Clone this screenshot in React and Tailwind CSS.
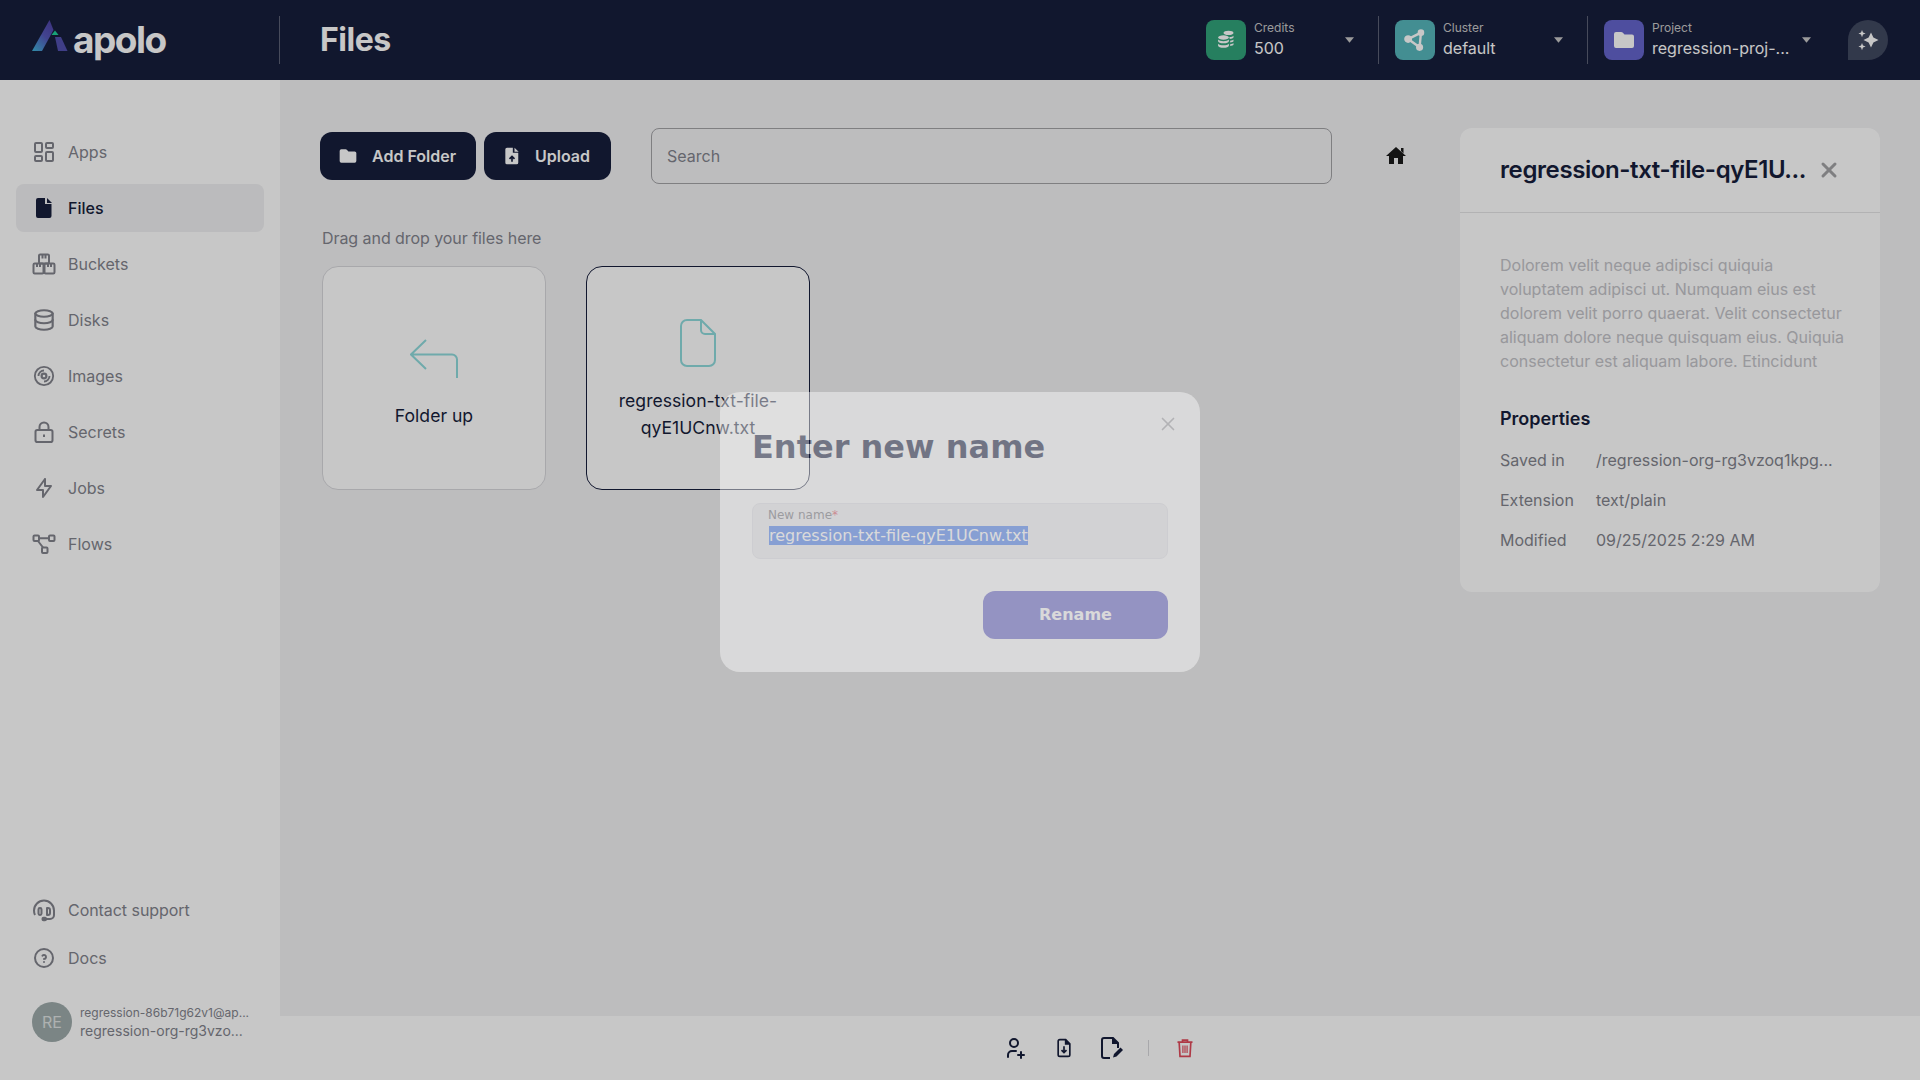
import React from "react";
import { LayoutDashboard, X } from "lucide-react";
import { TbDatabase, TbBolt, TbHelpCircle, TbUserPlus } from "react-icons/tb";

const Folder = ({ className }) => (
  <svg viewBox="0 0 24 24" className={className} fill="currentColor"><path d="M4 4h5.2c.5 0 1 .2 1.4.6L12.5 6.5H20a2 2 0 0 1 2 2V18a2 2 0 0 1-2 2H4a2 2 0 0 1-2-2V6a2 2 0 0 1 2-2z" /></svg>
);
const FileFill = ({ className }) => (
  <svg viewBox="0 0 24 24" className={className} fill="currentColor"><path d="M6 2h7v6h6.5v12a2 2 0 0 1-2 2H6a2 2 0 0 1-2-2V4a2 2 0 0 1 2-2z" /><path d="M15 2l5 5h-5z" /></svg>
);
const FileUp = ({ className }) => (
  <svg viewBox="0 0 24 24" className={className}><path fill="currentColor" d="M6 2h7v6h6.5v12a2 2 0 0 1-2 2H6a2 2 0 0 1-2-2V4a2 2 0 0 1 2-2z" /><path fill="currentColor" d="M15 2l5 5h-5z" /><path d="M12 19v-6M9 15.5l3-3 3 3" stroke="#171e3c" strokeWidth="2" fill="none" /></svg>
);
const BucketsIcon = ({ className }) => (
  <svg viewBox="0 0 24 24" className={className} fill="none" stroke="currentColor" strokeWidth="2" strokeLinejoin="round"><rect x="7" y="2.5" width="10" height="9" rx="1.2" /><rect x="1.5" y="11.5" width="10" height="10" rx="1.2" /><rect x="12.5" y="11.5" width="10" height="10" rx="1.2" /><path d="M10.5 3v3.5M13.5 3v3.5M5 12v3M8 12v3M16 12v3M19 12v3" /></svg>
);
const ImagesIcon = ({ className }) => (
  <svg viewBox="0 0 24 24" className={className} fill="none" stroke="currentColor" strokeWidth="2"><circle cx="12" cy="12" r="10" /><path d="M6 12a6 6 0 0 1 6-6" /><path d="M18 12a6 6 0 0 1-6 6" /><circle cx="12" cy="12" r="2.6" strokeWidth="2.4" /></svg>
);
const LockIcon = ({ className }) => (
  <svg viewBox="0 0 24 24" className={className} fill="none" stroke="currentColor" strokeWidth="2" strokeLinejoin="round"><rect x="3.5" y="10" width="17" height="12" rx="1.8" /><path d="M7.5 10V7a4.5 4.5 0 0 1 9 0v3" /><path d="M12 14.5v2.5" /></svg>
);
const HeadsetIcon = ({ className }) => (
  <svg viewBox="0 0 24 24" className={className} fill="none" stroke="currentColor" strokeWidth="2" strokeLinejoin="round"><path d="M3 17a10 10 0 0 1-1-4.5 10 10 0 0 1 20 0V17a4 4 0 0 1-4 4h-4" /><rect x="6.5" y="10" width="3" height="7" rx="1.4" /><path d="M15 10h1a2 2 0 0 1 2 2v3a2 2 0 0 1-2 2h-1z" /><rect x="10.5" y="19.8" width="3.5" height="2.4" rx="1" fill="currentColor" /></svg>
);
const FlowsIcon = ({ className }) => (
  <svg viewBox="0 0 24 24" className={className} fill="none" stroke="currentColor" strokeWidth="2" strokeLinejoin="round"><rect x="1.5" y="3.5" width="5.5" height="5.5" rx="1" /><rect x="17" y="3.5" width="5.5" height="5.5" rx="1" /><rect x="10" y="15.5" width="5.5" height="5.5" rx="1" /><path d="M7 6.2h10M6 9l5 6.5" /></svg>
);
const FileDown = ({ className }) => (
  <svg viewBox="0 0 24 24" className={className} fill="none" stroke="currentColor" strokeWidth="2"><path d="M14 2H7a2 2 0 0 0-2 2v16a2 2 0 0 0 2 2h10a2 2 0 0 0 2-2V7z" /><path d="M14 2v5h5" fill="currentColor" /><path d="M12 10v7M9 14.5l3 3 3-3" /></svg>
);
const FileEdit = ({ className }) => (
  <svg viewBox="0 0 24 24" className={className} fill="none" stroke="currentColor" strokeWidth="2"><path d="M10 22H4a2 2 0 0 1-2-2V4a2 2 0 0 1 2-2h9l5 5v5" /><path d="M13 2v5h5" fill="currentColor" /><path d="M13 21.5l1-3.5 6.5-6.5 2.5 2.5-6.5 6.5z" fill="currentColor" stroke="none" /></svg>
);
const Trash = ({ className }) => (
  <svg viewBox="0 0 24 24" className={className} fill="none" stroke="currentColor" strokeWidth="2"><path d="M3 5h18M9 5V2.5h6V5M5 5l1 17h12l1-17" /><path d="M9.5 9v9M12 9v9M14.5 9v9" strokeWidth="1.4" /></svg>
);
const Coins = ({ className }) => (
  <svg viewBox="0 0 24 24" className={className} fill="currentColor"><path d="M9 3.5c0-1.4 2.7-2.5 6-2.5s6 1.100 6 2.500S18.300 6 15 6 9 4.900 9 3.500z" /><path d="M16 8.500c2.500-.1 4.300-.9 5-1.700v2.200c-.5.800-2.200 1.500-4.500 1.700zM17 12.800c2-.2 3.400-.8 4-1.500v2.200c-.5.700-2 1.300-4 1.500zM17 17c2-.2 3.400-.8 4-1.500v2.200c-.5.700-2 1.300-4 1.500z" /><ellipse cx="9" cy="9" rx="6.500" ry="2.700" /><path d="M2.500 11.500c1.200 1.100 3.700 1.900 6.500 1.900s5.300-.8 6.500-1.900v2c0 1.400-2.900 2.500-6.500 2.500s-6.500-1.100-6.500-2.500z" /><path d="M2.500 16.500c1.200 1.100 3.700 1.900 6.500 1.900s5.300-.8 6.500-1.900v2.300c0 1.400-2.900 2.500-6.500 2.500s-6.500-1.100-6.500-2.500z" /></svg>
);
const ClusterIcon = ({ className }) => (
  <svg viewBox="0 0 24 24" className={className} fill="none" stroke="currentColor" strokeWidth="2.6" strokeLinejoin="round"><path d="M18.500 4L4.500 11l12.500 9z" /><circle cx="18.500" cy="4" r="2.300" fill="currentColor" /><circle cx="4.500" cy="11" r="3" fill="currentColor" /><circle cx="17" cy="20" r="2.600" fill="currentColor" /></svg>
);
const Sparkles = ({ className }) => (
  <svg viewBox="0 0 24 24" className={className} fill="currentColor"><path d="M15 4.500l2.400 5.100 5.100 2.400-5.100 2.400L15 19.500l-2.400-5.100L7.500 12l5.100-2.400z" /><path d="M6 2l1 2.600L9.600 5.600 7 6.600 6 9.200 5 6.600 2.400 5.600 5 4.600z" /><path d="M6 15l1 2.600 2.600 1L7 19.600 6 22.200l-1-2.600-2.600-1 2.600-1z" /></svg>
);
const HomeIcon = ({ className }) => (
  <svg viewBox="0 0 24 24" className={className} fill="currentColor"><path d="M10 20v-6h4v6h5v-8h3L12 3 2 12h3v8z" /><path d="M17 4h2.500v5.500L17 7z" /></svg>
);
const Caret = () => (
  <svg viewBox="0 0 10 6" className="w-[9px] h-[6px] text-[#c7c7c7] shrink-0" fill="currentColor"><path d="M0 0h10L5 6z" /></svg>
);

const Logo = () => (
  <div className="flex items-center">
    <svg viewBox="0 0 36 32" className="w-[36px] h-[32px] -mt-[9px]">
      <defs>
        <linearGradient id="lg" x1="0" y1="1" x2="0.7" y2="0">
          <stop offset="0" stopColor="#3fb4d8" />
          <stop offset="0.6" stopColor="#5557b8" />
          <stop offset="1" stopColor="#5046a8" />
        </linearGradient>
      </defs>
      <path d="M17.500 0L0 31h10L21.500 10z" fill="url(#lg)" />
      <path d="M23 17h6l6.500 14H26z" fill="#5150ad" />
      <path d="M23 10.500l3.500 4.500h-7z" fill="#1fd09a" />
    </svg>
    <span className="ml-[5px] mb-[2px] text-[37px] font-bold text-white tracking-[-1.5px] leading-none font-['Inter',sans-serif]">apolo</span>
  </div>
);

const nav = [
  ["Apps", <LayoutDashboard className="w-6 h-6" strokeWidth={2} />],
  ["Files", <FileFill className="w-6 h-6" />],
  ["Buckets", <BucketsIcon className="w-6 h-6" />],
  ["Disks", <TbDatabase className="w-[26px] h-[26px] shrink-0" />],
  ["Images", <ImagesIcon className="w-[22px] h-[22px]" />],
  ["Secrets", <LockIcon className="w-6 h-6" />],
  ["Jobs", <TbBolt className="w-6 h-6" />],
  ["Flows", <FlowsIcon className="w-6 h-6" />],
];

const Selector = ({ color, icon, label, value, textWidth }) => (
  <div className="flex items-center h-10">
    <div className={`w-10 h-10 rounded-lg flex items-center justify-center text-[#fff] shrink-0 ${color}`}>{icon}</div>
    <div className={`ml-2 flex flex-col ${textWidth}`}>
      <span className="text-[12px] leading-[14px] text-[#c7c7c7]">{label}</span>
      <span className="mt-[2px] text-[16px] leading-[22px] text-white whitespace-nowrap">{value}</span>
    </div>
    <Caret />
  </div>
);

export default function App() {
  return (
    <div className="relative w-full h-screen overflow-hidden flex flex-col bg-[#f2f2f4] font-['Inter',sans-serif]">
      <header className="h-20 bg-[#171e3c] flex items-center shrink-0">
        <div className="w-[280px] h-12 pl-8 flex items-center border-r border-[#5c6075]">
          <Logo />
        </div>
        <h1 className="ml-10 text-[32px] font-bold text-white tracking-[-0.5px]">Files</h1>
        <div className="ml-auto flex items-center pr-8">
          <div className="pr-[24px] border-r border-[#5c6075] h-12 flex items-center">
            <Selector color="bg-[#31a37a]" icon={<Coins className="w-5 h-5" />} label="Credits" value="500" textWidth="w-[91px]" />
          </div>
          <div className="pl-4 pr-[24px] border-r border-[#5c6075] h-12 flex items-center">
            <Selector color="bg-[#56b7bb]" icon={<ClusterIcon className="w-[22px] h-[22px]" />} label="Cluster" value="default" textWidth="w-[111px]" />
          </div>
          <div className="pl-4 flex items-center">
            <Selector color="bg-[#6564cc]" icon={<Folder className="w-6 h-6" />} label="Project" value="regression-proj-..." textWidth="w-[150px]" />
          </div>
          <div className="ml-[37px] w-10 h-10 rounded-full rounded-bl-none bg-[#414961] flex items-center justify-center text-white">
            <Sparkles className="w-6 h-6" />
          </div>
        </div>
      </header>

      <div className="flex-1 flex min-h-0">
        <aside className="w-[280px] shrink-0 bg-white flex flex-col px-4 pt-[48px] pb-[38px] text-[#82838c]">
          <nav className="flex flex-col gap-2">
            {nav.map(([label, icon]) => {
              const active = label === "Files";
              return (
                <div key={label} className={`h-12 rounded-lg flex items-center pl-[16px] gap-[12px] ${active ? "bg-[#f0f0f2] text-[#171e3c] font-medium" : ""}`}>
                  <span className="w-6 h-6 flex items-center justify-center shrink-0">{icon}</span>
                  <span className="text-[16px]">{label}</span>
                </div>
              );
            })}
          </nav>
          <div className="mt-auto flex flex-col">
            <div className="h-12 flex items-center pl-[16px] gap-[12px]"><HeadsetIcon className="w-6 h-6" /><span className="text-[16px] tracking-[-0.05px]">Contact support</span></div>
            <div className="h-12 flex items-center pl-[16px] gap-[12px]"><TbHelpCircle className="w-6 h-6" /><span className="text-[16px]">Docs</span></div>
            <div className="mt-[20px] flex items-center pl-[16px] gap-2">
              <div className="w-10 h-10 rounded-full bg-[#9eabab] text-[#dfe3e3] flex items-center justify-center text-[16px]">RE</div>
              <div className="flex flex-col">
                <span className="text-[12px] leading-[18px]">regression-86b71g62v1@ap...</span>
                <span className="text-[14px] leading-[18px]">regression-org-rg3vzo...</span>
              </div>
            </div>
          </div>
        </aside>

        <main className="flex-1 flex flex-col min-w-0">
          <div className="flex-1 flex items-start pt-12 pl-10 min-h-0">
            <div className="w-[1100px] shrink-0">
              <div className="flex items-center h-14">
                <button className="h-12 w-[156px] shrink-0 rounded-xl bg-[#171e3c] text-white flex items-center pl-[18px] gap-[14px] text-[16px] font-semibold"><Folder className="w-5 h-5" />Add Folder</button>
                <button className="ml-2 h-12 w-[127px] shrink-0 rounded-xl bg-[#171e3c] text-white flex items-center pl-[18px] gap-[13px] text-[16px] font-semibold"><FileUp className="w-5 h-5" />Upload</button>
                <div className="ml-10 w-[681px] shrink-0 h-14 rounded-lg border border-[#a3a3a6] flex items-center pl-[15px] text-[16px] text-[#82838c]">Search</div>
                <HomeIcon className="ml-[52px] w-6 h-6 text-[#1a1a1a] shrink-0" />
              </div>
              <p className="mt-[42px] ml-[2px] text-[16px] leading-6 text-[#82838c] tracking-[-0.06px]">Drag and drop your files here</p>
              <div className="mt-[16px] ml-[2px] flex gap-10">
                <div className="w-[224px] h-[224px] rounded-2xl bg-white border border-[#d8d8dc] flex flex-col items-center pt-[72px] text-[#171e3c]">
                  <svg viewBox="0 0 48 40" className="w-[48px] h-[40px] text-[#8fdadc]" fill="none" stroke="currentColor" strokeWidth="2"><path d="M16 1L1 15.500 16 30M1 15.500h41a5 5 0 0 1 5 5V39" /></svg>
                  <span className="mt-[24px] text-[17.6px] leading-[26px]">Folder up</span>
                </div>
                <div className="w-[224px] h-[224px] rounded-2xl bg-white border border-[#171e3c] flex flex-col items-center pt-[52px] text-[#171e3c]">
                  <svg viewBox="0 0 36 48" className="w-[36px] h-[48px] text-[#8fdadc]" fill="none" stroke="currentColor" strokeWidth="2"><path d="M21 1H7a6 6 0 0 0-6 6v34a6 6 0 0 0 6 6h22a6 6 0 0 0 6-6V15zM21 1v10a4 4 0 0 0 4 4h10" /></svg>
                  <span className="mt-[20px] px-4 text-[17.6px] leading-[27px] text-center break-words w-[210px]">regression-txt-file-qyE1UCnw.txt</span>
                </div>
              </div>
            </div>
            <section className="ml-10 w-[420px] shrink-0 h-[464px] rounded-xl bg-white">
              <div className="h-[85px] border-b border-[#e4e4e6] flex items-center pl-10 gap-[11px]">
                <h2 className="text-[24px] font-semibold text-[#171e3c] whitespace-nowrap tracking-[-0.4px]">regression-txt-file-qyE1U...</h2>
                <X className="w-6 h-6 text-[#a3a3a6] shrink-0" strokeWidth={3} />
              </div>
              <div className="pl-10 pr-[30px] pt-[40px]">
                <p className="text-[16px] leading-6 text-[#c3c3c8]">Dolorem velit neque adipisci quiquia voluptatem adipisci ut. Numquam eius est dolorem velit porro quaerat. Velit consectetur aliquam dolore neque quisquam eius. Quiquia consectetur est aliquam labore. Etincidunt</p>
                <h3 className="mt-[32px] text-[18px] leading-7 font-semibold text-[#171e3c]">Properties</h3>
                <dl className="mt-[15px] flex flex-col gap-4 text-[16px] leading-6 text-[#82838c]">
                  <div className="flex"><dt className="w-[96px]">Saved in</dt><dd className="whitespace-nowrap">/regression-org-rg3vzoq1kpg...</dd></div>
                  <div className="flex"><dt className="w-[96px]">Extension</dt><dd>text/plain</dd></div>
                  <div className="flex"><dt className="w-[96px]">Modified</dt><dd>09/25/2025 2:29 AM</dd></div>
                </dl>
              </div>
            </section>
          </div>
          <footer className="h-16 shrink-0 bg-white flex items-center justify-center text-[#171e3c] pr-1">
            <TbUserPlus className="w-6 h-6" />
            <FileDown className="ml-[28px] w-5 h-5" />
            <FileEdit className="ml-[26px] w-6 h-6" />
            <span className="ml-[24px] h-4 w-px bg-[#d8d8dc]" />
            <Trash className="ml-[26px] w-5 h-5 text-[#e04a5a]" />
          </footer>
        </main>
      </div>

      <div className="absolute inset-0 bg-black/[0.22]" />

      <div className="absolute left-[720px] top-[392px] w-[480px] h-[280px] rounded-[20px] bg-white opacity-[0.43] p-8 font-['DejaVu_Sans',sans-serif]">
        <X className="absolute right-[21px] top-[21px] w-[22px] h-[22px] text-[#a5a5aa]" strokeWidth={1.8} />
        <h2 className="mt-[3px] text-[32px] leading-[40px] font-bold text-[#10163a]">Enter new name</h2>
        <div className="mt-[36px] h-14 rounded-lg bg-[#eeeef1] border border-[#e4e4ea] pl-[15px] pt-[3px]">
          <div className="text-[12px] leading-4 text-[#707078]">New name<span className="text-[#e04a5a]">*</span></div>
          <div className="text-[16px] leading-[19px] mt-[3px] ml-[1px]"><span className="bg-[#4178f0] text-white">regression-txt-file-qyE1UCnw.txt</span></div>
        </div>
        <div className="mt-8 flex justify-end">
          <button className="w-[185px] h-12 rounded-xl bg-[#605dc8] text-white text-[16px] font-bold">Rename</button>
        </div>
      </div>
    </div>
  );
}
